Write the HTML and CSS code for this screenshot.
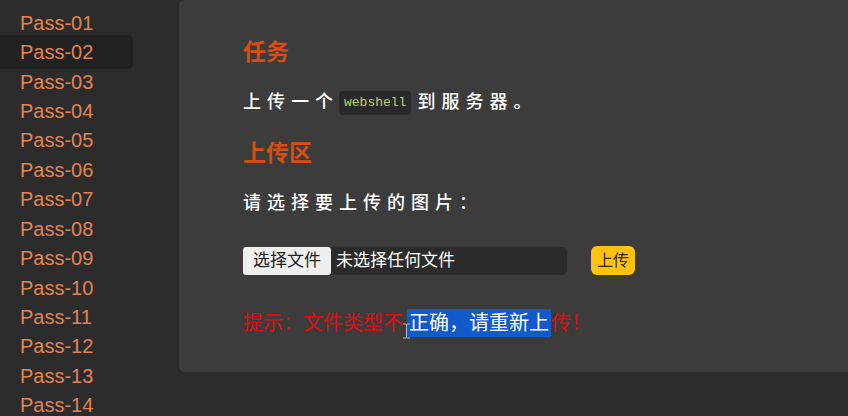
FILE: index.html
```html
<!DOCTYPE html>
<html lang="zh-CN">
<head>
<meta charset="utf-8">
<title>upload-labs</title>
<link rel="stylesheet" href="styles.css">
</head>
<body>
<div class="layout">
  <nav class="sidebar">
    <ul class="pass-list">
      <li><a href="#1">Pass-01</a></li>
      <li><a href="#2" class="active">Pass-02</a></li>
      <li><a href="#3">Pass-03</a></li>
      <li><a href="#4">Pass-04</a></li>
      <li><a href="#5">Pass-05</a></li>
      <li><a href="#6">Pass-06</a></li>
      <li><a href="#7">Pass-07</a></li>
      <li><a href="#8">Pass-08</a></li>
      <li><a href="#9">Pass-09</a></li>
      <li><a href="#10">Pass-10</a></li>
      <li><a href="#11">Pass-11</a></li>
      <li><a href="#12">Pass-12</a></li>
      <li><a href="#13">Pass-13</a></li>
      <li><a href="#14">Pass-14</a></li>
    </ul>
  </nav>
  <main class="panel">
    <h3>任务</h3>
    <p class="text">上传一个<code>webshell</code>到服务器。</p>
    <h3>上传区</h3>
    <p class="text">请选择要上传的图片：</p>
    <form class="upload">
      <label class="file" for="file">
        <input type="file" id="file" class="file-input">
        <span class="file-button">选择文件</span>
        <span class="file-name">未选择任何文件</span>
      </label>
      <button type="submit" class="submit">上传</button>
    </form>
    <p class="hint">提示：文件类型不<mark>正确，请重新上<svg class="ibeam" width="9" height="16" viewBox="0 0 9 16" aria-hidden="true"><path d="M1 1h3l.5.5L5 1h3M4.5 1v14M1 15h3l.5-.5.5.5h3"/></svg></mark>传！</p>
  </main>
</div>
</body>
</html>
```
FILE: styles.css
```css
* {
  box-sizing: border-box;
}

body {
  margin: 0;
  background: #2c2c2c;
  color: #fff;
  font-family: "Liberation Sans", "Noto Sans CJK SC", sans-serif;
}

.layout {
  display: flex;
  align-items: flex-start;
  height: 100vh;
  overflow: hidden;
}

.sidebar {
  flex: 0 0 179px;
  padding-top: 8px;
}

.pass-list {
  display: grid;
  grid-auto-rows: 1fr;
  height: calc(100vh - 4px);
  margin: 0;
  padding: 0;
  list-style: none;
}

.pass-list li {
  display: flex;
  align-items: center;
}

.pass-list a {
  width: 133px;
  margin: -3px 0;
  padding-left: 20px;
  border-radius: 0 5px 5px 0;
  color: #e38354;
  font-size: 20px;
  line-height: 34px;
  text-decoration: none;
}

.pass-list .active {
  background: #212121;
}

.panel {
  flex: 1;
  padding: 32px 64px 35px;
  border-radius: 6px 0 0 6px;
  background: #3c3c3c;
}

h3 {
  margin: 0 0 15px;
  color: #d84e12;
  font-size: 23px;
  line-height: 40px;
}

.text {
  margin: 0 0 16px;
  font-size: 18px;
  font-weight: 500;
  line-height: 30px;
  letter-spacing: 6px;
}

code {
  display: inline-block;
  margin-right: 6px;
  padding: 0 5px;
  border-radius: 4px;
  background: #292929;
  color: #c3d264;
  font-family: "Liberation Mono", monospace;
  font-size: 13px;
  line-height: 24px;
  letter-spacing: normal;
  vertical-align: middle;
}

.upload {
  display: flex;
  align-items: center;
  gap: 24px;
  margin: 28px 0 34px;
}

.file {
  position: relative;
  display: flex;
  align-items: center;
  flex: 0 1 324px;
  border-radius: 5px;
  background: #2b2b2b;
  font-size: 17px;
  line-height: 28px;
}

.file-input {
  position: absolute;
  inset: 0;
  width: 100%;
  opacity: 0;
}

.file-button {
  padding: 0 10px;
  border-radius: 3px;
  background: #efefef;
  color: #222;
}

.file-name {
  padding-left: 5px;
}

.submit {
  padding: 0 6px;
  border: 0;
  border-radius: 6px;
  background: #ffc20e;
  color: #332805;
  font-family: inherit;
  font-size: 16px;
  line-height: 29px;
}

.hint {
  margin: 0;
  color: #e00b12;
  font-size: 20px;
  line-height: 28px;
}

mark {
  position: relative;
  display: inline-block;
  margin-left: 4px;
  padding: 0 2px;
  background: #1259cc;
  color: #fff;
}

.ibeam {
  position: absolute;
  left: -5px;
  bottom: -2px;
  fill: none;
  stroke: #b9b9b9;
}
```
